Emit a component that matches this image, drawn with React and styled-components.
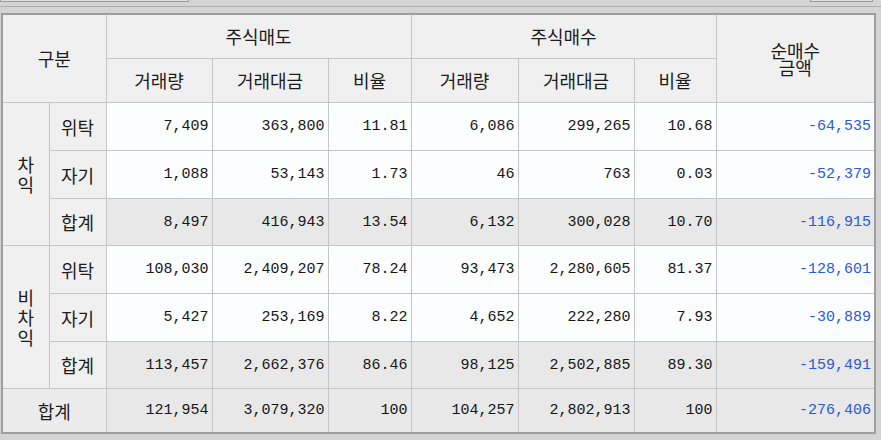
import React from 'react'
import styled, { createGlobalStyle } from 'styled-components'

const GlobalStyle = createGlobalStyle`
  body {
    margin: 0;
    background-color: #d4d4d4;
    font-family: "Noto Sans CJK KR", "Noto Sans", sans-serif;
    color: #1c1c1c;
  }
`

const Page = styled.div`
  width: 881px;
  height: 440px;
  overflow: hidden;
`

const Toolbar = styled.div`
  display: flex;
  justify-content: space-between;
  height: 6px;
  padding-right: 8px;
  border-bottom: 1px solid #b0b0b0;
`

const Stub = styled.div`
  width: ${(p) => p.$width}px;
  height: 1px;
  background-color: #e2e2e2;
  border: 1px solid #9a9a9a;
  border-top: none;
`

const Frame = styled.div`
  margin: 6px 0 0 1px;
  width: 873px;
`

const Table = styled.table`
  border-collapse: collapse;
  table-layout: fixed;
  width: 873px;
  border: 2px solid #9e9e9e;
`

const Head = styled.th`
  height: ${(p) => p.$h || 43}px;
  padding: 0;
  background-color: #f0f0f0;
  border: 1px solid #c6c6c6;
  font-weight: normal;
  font-size: 18px;
  line-height: 17px;
  text-align: center;
  vertical-align: middle;
`

const Label = styled.td`
  padding: 0;
  background-color: ${(p) => (p.$sum ? '#ececec' : '#f0f0f0')};
  border: 1px solid #c6c6c6;
  font-size: 18px;
  text-align: center;
  vertical-align: middle;
`

const Stack = styled.div`
  display: flex;
  flex-direction: column;
  align-items: center;
  line-height: 20px;
`

const Num = styled.td`
  height: ${(p) => p.$h || 46}px;
  padding: 0 3px 0 0;
  background-color: ${(p) => (p.$sum ? '#e8e8e8' : '#fcfdff')};
  border: 1px solid #c6c6c6;
  font-family: "Liberation Mono", "DejaVu Sans Mono", monospace;
  font-size: 15px;
  text-align: right;
  vertical-align: middle;
  color: ${(p) => (p.$blue ? '#2c5ad2' : '#161616')};
`

const widths = [47, 57, 106, 116, 83, 107, 116, 82, 159]

const groups = [
  {
    name: ['차', '익'],
    rows: [
      ['위탁', '7,409', '363,800', '11.81', '6,086', '299,265', '10.68', '-64,535'],
      ['자기', '1,088', '53,143', '1.73', '46', '763', '0.03', '-52,379'],
      ['합계', '8,497', '416,943', '13.54', '6,132', '300,028', '10.70', '-116,915'],
    ],
  },
  {
    name: ['비', '차', '익'],
    rows: [
      ['위탁', '108,030', '2,409,207', '78.24', '93,473', '2,280,605', '81.37', '-128,601'],
      ['자기', '5,427', '253,169', '8.22', '4,652', '222,280', '7.93', '-30,889'],
      ['합계', '113,457', '2,662,376', '86.46', '98,125', '2,502,885', '89.30', '-159,491'],
    ],
  },
]

const total = ['121,954', '3,079,320', '100', '104,257', '2,802,913', '100', '-276,406']

const heights = [47, 47, 46]

const App = () => {
  return (
    <Page>
      <GlobalStyle />
      <Toolbar>
        <Stub $width={187} />
        <Stub $width={61} />
      </Toolbar>
      <Frame>
        <Table>
          <colgroup>
            {widths.map((w, i) => (
              <col key={i} style={{ width: w }} />
            ))}
          </colgroup>
          <thead>
            <tr>
              <Head colSpan={2} rowSpan={2}>구분</Head>
              <Head colSpan={3} $h={43}>주식매도</Head>
              <Head colSpan={3} $h={43}>주식매수</Head>
              <Head rowSpan={2}>
                순매수
                <br />
                금액
              </Head>
            </tr>
            <tr>
              <Head>거래량</Head>
              <Head>거래대금</Head>
              <Head>비율</Head>
              <Head>거래량</Head>
              <Head>거래대금</Head>
              <Head>비율</Head>
            </tr>
          </thead>
          <tbody>
            {groups.map((g) =>
              g.rows.map((r, i) => {
                const sum = r[0] === '합계'
                return (
                  <tr key={g.name.join('') + i}>
                    {i === 0 && (
                      <Label rowSpan={3}>
                        <Stack>
                          {g.name.map((c, j) => (
                            <span key={j}>{c}</span>
                          ))}
                        </Stack>
                      </Label>
                    )}
                    <Label>{r[0]}</Label>
                    {r.slice(1).map((v, j) => (
                      <Num key={j} $h={heights[i]} $sum={sum} $blue={j === 6}>
                        {v}
                      </Num>
                    ))}
                  </tr>
                )
              })
            )}
            <tr>
              <Label colSpan={2} $sum>합계</Label>
              {total.map((v, j) => (
                <Num key={j} $h={43} $sum $blue={j === 6}>
                  {v}
                </Num>
              ))}
            </tr>
          </tbody>
        </Table>
      </Frame>
    </Page>
  )
}

export default App
